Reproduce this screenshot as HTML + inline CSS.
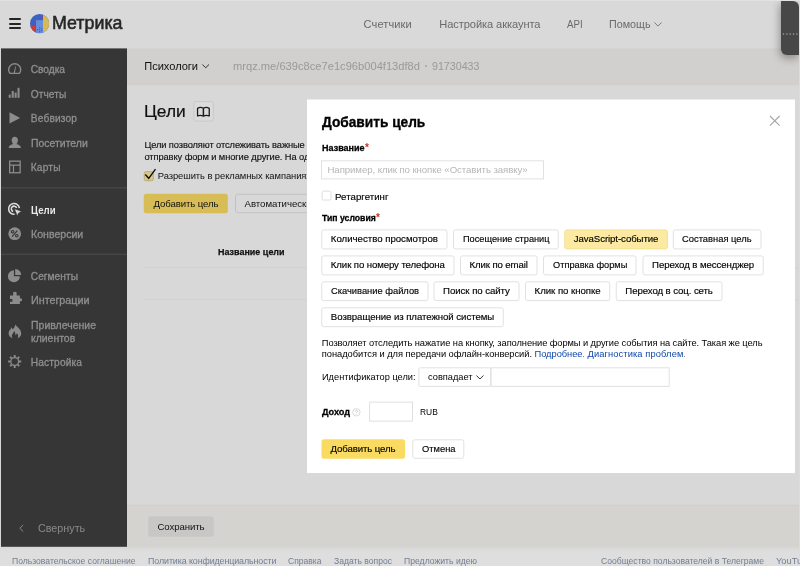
<!DOCTYPE html>
<html lang="ru"><head><meta charset="utf-8"><title>Метрика — Цели</title>
<style>
html,body{margin:0;padding:0;}
body{width:800px;height:566px;overflow:hidden;position:relative;background:#d8d8d8;font-family:"Liberation Sans",sans-serif;}
#page,#modal{position:absolute;left:0;top:0;width:800px;height:566px;overflow:hidden;will-change:transform;}
.t{position:absolute;white-space:nowrap;transform-origin:0 50%;}
.r{position:absolute;box-sizing:border-box;}
.b{position:absolute;box-sizing:border-box;background:#fff;border:1px solid #e1e1e1;border-radius:2.5px;}
.b.ck{background:#ffeba0;border-color:#ffeba0;}
svg{position:absolute;overflow:visible;}

</style></head>
<body>
<div id="page">
<svg style="left:0;top:0" width="800" height="566" viewBox="0 0 800 566">
<rect x="0.00" y="0.00" width="800.00" height="48.40" rx="0.00" fill="#d9d9d9"/>
<rect x="127.00" y="48.40" width="673.00" height="37.10" rx="0.00" fill="#d1d0ce"/>
<rect x="1.00" y="48.40" width="126.00" height="498.40" rx="0.00" fill="#363636"/>
<rect x="1.00" y="187.40" width="126.00" height="1.00" rx="0.00" fill="#4c4c4c"/>
<rect x="1.00" y="253.70" width="126.00" height="1.00" rx="0.00" fill="#4c4c4c"/>
<rect x="127.00" y="505.00" width="673.00" height="41.80" rx="0.00" fill="#d5d3d0"/>
<rect x="127.00" y="504.70" width="673.00" height="0.80" rx="0.00" fill="#cfcecb"/>
<rect x="148.25" y="516.25" width="65.50" height="20.50" rx="2.50" fill="#c8c7c5"/>
<rect x="193.90" y="101.60" width="19.40" height="19.50" rx="2.00" fill="#dbdbdb" stroke="#c9c9c9" stroke-width="1"/>
<rect x="144.25" y="171.75" width="9.00" height="9.00" rx="1.50" fill="#d9c98a" stroke="#b9ab74" stroke-width="1"/>
<rect x="143.75" y="193.75" width="84.05" height="19.55" rx="2.50" fill="#d8bc56"/>
<rect x="235.50" y="194.25" width="94.00" height="18.50" rx="2.00" fill="#d8d8d8" stroke="#c2c2c2" stroke-width="1"/>
<rect x="144.00" y="267.10" width="656.00" height="1.00" rx="0.00" fill="#d2d2d2"/>
<rect x="144.00" y="299.10" width="656.00" height="1.00" rx="0.00" fill="#d2d2d2"/>
</svg>
<!-- footer -->
<div class="r" style="left:0;top:546.8px;width:800px;height:19.2px;background:linear-gradient(#d6d6d6 0,#dcdcdc 3px,#dedede 6px)"></div>
<!-- header -->
<!-- hamburger -->
<div class="r" style="left:9px;top:18.3px;width:11.8px;height:1.8px;border-radius:1px;background:#242424"></div>
<div class="r" style="left:9px;top:22.85px;width:11.8px;height:1.8px;border-radius:1px;background:#242424"></div>
<div class="r" style="left:9px;top:27.4px;width:11.8px;height:1.8px;border-radius:1px;background:#242424"></div>
<!-- logo -->
<svg style="left:29.85px;top:13.75px" width="19.2" height="19.2" viewBox="0 0 19.2 19.2">
  <defs><clipPath id="lc"><circle cx="9.6" cy="9.6" r="9.6"/></clipPath></defs>
  <g clip-path="url(#lc)">
    <rect x="0" y="0" width="19.2" height="19.2" fill="#3f60c0"/>
    <rect x="0" y="11.85" width="5.55" height="8" fill="#cd3d37"/>
    <rect x="6.05" y="6.15" width="6.9" height="14" fill="#668edb"/>
    <rect x="12.55" y="0" width=".5" height="6.2" fill="#6a3a78"/>
    <rect x="12.95" y="0" width="7" height="19.2" fill="#d5ba55"/>
    <g fill="#3758ba"><circle cx="9.65" cy="13.55" r=".6"/><circle cx="11.75" cy="14.65" r=".6"/><circle cx="7.45" cy="15.65" r=".6"/><circle cx="9.65" cy="15.65" r=".6"/><circle cx="11.75" cy="16.65" r=".6"/><circle cx="9.65" cy="17.65" r=".6"/></g>
  </g>
</svg>
<!-- nav chevron -->
<svg style="left:654.4px;top:21.8px" width="9" height="6" viewBox="0 0 9 6"><path d="M0.4 0.5 L4 4.1 L7.6 0.5" fill="none" stroke="#7a7a7a" stroke-width="1"/></svg>
<!-- subheader -->
<svg style="left:202.3px;top:64.2px" width="8" height="5" viewBox="0 0 8 5"><path d="M0.4 0.5 L3.7 3.8 L7 0.5" fill="none" stroke="#333" stroke-width="1"/></svg>
<div class="r" style="left:424.5px;top:65.4px;width:2px;height:2px;border-radius:1px;background:#a3a3a0"></div>
<!-- top-right dark widget -->
<div class="r" style="left:781px;top:1px;width:17.8px;height:53.8px;background:#474747;border-radius:0 6px 0 6px;box-shadow:-1px 3px 9px rgba(0,0,0,.36)"></div>
<svg style="left:0;top:0" width="800" height="60" viewBox="0 0 800 60"><rect x="782.85" y="33.4" width="1.3" height="1.3" fill="#a2a2a2"/><rect x="786.25" y="33.4" width="1.3" height="1.3" fill="#a2a2a2"/><rect x="789.60" y="33.4" width="1.3" height="1.3" fill="#a2a2a2"/><rect x="792.90" y="33.4" width="1.3" height="1.3" fill="#a2a2a2"/><rect x="796.25" y="33.4" width="1.3" height="1.3" fill="#a2a2a2"/></svg>
<!-- sidebar -->
<!-- sidebar icons -->
<svg style="left:0;top:0" width="130" height="566" viewBox="0 0 130 566" fill="#8c8c8c" stroke="none">
  <!-- gauge -->
  <path d="M10.2 73.4 A6.05 5.75 0 1 1 19.2 73.4 Z" fill="none" stroke="#8c8c8c" stroke-width="1.4" stroke-linejoin="round"/>
  <path d="M13.6 72.9 L14.9 72.9 L16 66.4 L15.4 66.2 Z" fill="#8c8c8c"/>
  <!-- bars -->
  <rect x="8.7" y="94.6" width="2.05" height="3.2"/><rect x="11.7" y="91" width="2.05" height="6.8"/><rect x="14.6" y="92.6" width="2.05" height="5.2"/><rect x="17.5" y="87.8" width="2.05" height="10"/>
  <!-- play -->
  <path d="M9.5 112.2 L20.1 117.9 L9.5 123.6 Z"/>
  <!-- person -->
  <ellipse cx="14.8" cy="140.3" rx="3.1" ry="3.6"/>
  <path d="M8.7 147.9 C8.7 145.6 10.5 145.1 12.6 144.3 L13 142.5 L16.6 142.5 L17 144.3 C19.1 145.1 20.9 145.6 20.9 147.9 Z"/>
  <!-- maps -->
  <rect x="9.65" y="161.15" width="10.5" height="11.6" fill="none" stroke="#8c8c8c" stroke-width="1.3"/>
  <path d="M9.6 165.1 H20.2 M13.5 165.1 V172.8" fill="none" stroke="#8c8c8c" stroke-width="1.2"/>
  <!-- goals (active) -->
  <g fill="none" stroke="#dcdcdc" stroke-width="1.55">
    <path d="M14.6 214.3 A5.4 5.4 0 1 1 19.4 208.2"/>
    <path d="M13.2 211.4 A2.7 2.7 0 1 1 16.6 208"/>
  </g>
  <path d="M14.4 208.7 L21.5 211.5 L18.6 213 L17.3 215.8 Z" fill="#dcdcdc" stroke="#363636" stroke-width=".5"/>
  <!-- conversions -->
  <circle cx="14.7" cy="233.7" r="6.4"/>
  <g fill="none" stroke="#363636" stroke-width="1.15">
    <circle cx="12.6" cy="231.7" r="1.25"/><circle cx="16.8" cy="235.7" r="1.25"/><path d="M17.3 230.7 L12.1 236.7"/>
  </g>
  <!-- segments (pie) -->
  <path d="M13.9 270.2 A6 6 0 1 0 19.9 276.2 L13.9 276.2 Z"/>
  <path d="M15.2 268.9 A6 6 0 0 1 21.2 274.9 L15.2 274.9 Z"/>
  <!-- puzzle -->
  <path d="M10 295.5 H13.2 V294 A1.75 1.75 0 1 1 16.6 294 V295.5 H19.9 V298.3 H20.6 A1.5 1.5 0 1 1 20.6 301.3 H19.9 V304 H10 V301.8 H12.4 V298.9 H10 Z"/>
  <!-- flame -->
  <path d="M15.2 324.6 C17.2 327.2 21.2 329.4 21.2 333.4 C21.2 335.8 19.8 337.5 17.6 338.2 C18.6 336.6 18.2 334.6 16.9 333.3 C16.4 334.5 15.9 334.9 15.4 335.2 C15.6 333.5 15 332.2 13.9 331.1 C13.9 333.2 11.8 334.1 11.8 336 C11.8 336.9 12.1 337.6 12.6 338.2 C10.3 337.6 8.6 335.8 8.6 333.3 C8.6 330.4 10.8 329.2 11.7 327.2 C12.2 328 12.4 328.7 12.4 329.6 C13.9 328.4 15.1 326.8 15.2 324.6 Z"/>
  <!-- gear -->
  <circle cx="14.7" cy="361.5" r="3.9" fill="none" stroke="#8c8c8c" stroke-width="1.3"/>
  <g stroke="#8c8c8c" stroke-width="1.9" fill="none">
    <path d="M14.7 355 V357.2 M14.7 365.8 V368 M8.2 361.5 H10.4 M19 361.5 H21.2 M10.1 356.9 L11.65 358.45 M17.75 364.55 L19.3 366.1 M10.1 366.1 L11.65 364.55 M17.75 358.45 L19.3 356.9"/>
  </g>
  <!-- collapse chevron -->
  <path d="M23.2 525 L19.8 528.3 L23.2 531.6" fill="none" stroke="#8a8a8a" stroke-width="1"/>
</svg>
<!-- bottom bar -->
<!-- footer -->
<!-- title book icon -->
<svg style="left:190px;top:100px" width="30" height="24" viewBox="190 100 30 24"><path d="M197.55 108.4 Q200.5 106.5 203.4 108.3 Q206.3 106.5 209.25 108.4 V115.9 Q206.3 114.7 203.4 116.1 Q200.5 114.7 197.55 115.9 Z" fill="none" stroke="#1c1c1c" stroke-width="1.3" stroke-linejoin="round"/><path d="M203.4 108.3 V116.1" stroke="#1c1c1c" stroke-width="1.5"/></svg>
<!-- checkbox -->
<svg style="left:140px;top:160px" width="24" height="24" viewBox="140 160 24 24"><path d="M145.3 174.5 L148.7 178.3 L155.5 169.1" fill="none" stroke="#111" stroke-width="1.4"/></svg>
<!-- main buttons -->
<!-- table lines -->

<!-- window edge strips -->
<div class="r" style="left:798.8px;top:0;width:1.2px;height:566px;background:#dcdcdc"></div>
<div class="r" style="left:0;top:0;width:800px;height:.7px;background:#e2e2e2"></div>

<span class="t" style="left:52.20px;top:12px;line-height:21px;height:21px;font-size:18.4px;color:#262626;transform:scaleX(0.9691);-webkit-text-stroke:0.55px #262626;">Метрика</span>
<span class="t" style="left:363.60px;top:18px;line-height:12px;height:12px;font-size:11.1px;color:#6a6a6a;letter-spacing:0.060px;">Счетчики</span>
<span class="t" style="left:439.30px;top:18px;line-height:12px;height:12px;font-size:11.1px;color:#6a6a6a;letter-spacing:-0.087px;">Настройка аккаунта</span>
<span class="t" style="left:567.30px;top:18px;line-height:12px;height:12px;font-size:11.1px;color:#6a6a6a;transform:scaleX(0.8776);">API</span>
<span class="t" style="left:609.00px;top:18px;line-height:12px;height:12px;font-size:11.1px;color:#6a6a6a;transform:scaleX(0.9683);">Помощь</span>
<span class="t" style="left:144.30px;top:60px;line-height:12px;height:12px;font-size:11.1px;color:#111;letter-spacing:-0.047px;">Психологи</span>
<span class="t" style="left:233.00px;top:61px;line-height:11px;height:11px;font-size:10.4px;color:#9a9996;transform:scaleX(1.0718);">mrqz.me/639c8ce7e1c96b004f13df8d</span>
<span class="t" style="left:432.00px;top:61px;line-height:11px;height:11px;font-size:10.4px;color:#9a9996;transform:scaleX(1.0274);">91730433</span>
<span class="t" style="left:30.75px;top:64px;line-height:11px;height:11px;font-size:10.2px;color:#8f8f8f;letter-spacing:-0.028px;-webkit-text-stroke:0.3px #8f8f8f;">Сводка</span>
<span class="t" style="left:30.75px;top:89px;line-height:11px;height:11px;font-size:10.2px;color:#8f8f8f;letter-spacing:0.056px;-webkit-text-stroke:0.3px #8f8f8f;">Отчеты</span>
<span class="t" style="left:30.75px;top:113px;line-height:11px;height:11px;font-size:10.2px;color:#8f8f8f;letter-spacing:0.152px;-webkit-text-stroke:0.3px #8f8f8f;">Вебвизор</span>
<span class="t" style="left:30.75px;top:138px;line-height:11px;height:11px;font-size:10.2px;color:#8f8f8f;transform:scaleX(1.0266);-webkit-text-stroke:0.3px #8f8f8f;">Посетители</span>
<span class="t" style="left:30.75px;top:162px;line-height:11px;height:11px;font-size:10.2px;color:#8f8f8f;letter-spacing:0.180px;-webkit-text-stroke:0.3px #8f8f8f;">Карты</span>
<span class="t" style="left:30.75px;top:229px;line-height:11px;height:11px;font-size:10.2px;color:#8f8f8f;transform:scaleX(1.0379);-webkit-text-stroke:0.3px #8f8f8f;">Конверсии</span>
<span class="t" style="left:30.75px;top:271px;line-height:11px;height:11px;font-size:10.2px;color:#8f8f8f;letter-spacing:0.031px;-webkit-text-stroke:0.3px #8f8f8f;">Сегменты</span>
<span class="t" style="left:30.75px;top:295px;line-height:11px;height:11px;font-size:10.2px;color:#8f8f8f;transform:scaleX(1.0552);-webkit-text-stroke:0.3px #8f8f8f;">Интеграции</span>
<span class="t" style="left:30.75px;top:320px;line-height:11px;height:11px;font-size:10.2px;color:#8f8f8f;transform:scaleX(1.0302);-webkit-text-stroke:0.3px #8f8f8f;">Привлечение</span>
<span class="t" style="left:30.75px;top:333px;line-height:11px;height:11px;font-size:10.2px;color:#8f8f8f;transform:scaleX(1.0257);-webkit-text-stroke:0.3px #8f8f8f;">клиентов</span>
<span class="t" style="left:30.75px;top:357px;line-height:11px;height:11px;font-size:10.2px;color:#8f8f8f;letter-spacing:0.137px;-webkit-text-stroke:0.3px #8f8f8f;">Настройка</span>
<span class="t" style="left:30.75px;top:205px;line-height:11px;height:11px;font-size:10.2px;color:#e8e8e8;font-weight:bold;transform:scaleX(0.9454);">Цели</span>
<span class="t" style="left:37.50px;top:522px;line-height:12px;height:12px;font-size:11.1px;color:#8a8a8a;transform:scaleX(0.9701);">Свернуть</span>
<span class="t" style="left:144.30px;top:102px;line-height:19px;height:19px;font-size:16.8px;color:#111;transform:scaleX(1.0332);-webkit-text-stroke:0.2px #111;">Цели</span>
<span class="t" style="left:144.40px;top:140px;line-height:10px;height:10px;font-size:9.3px;color:#111;letter-spacing:-0.098px;-webkit-text-stroke:0.15px #111;">Цели позволяют отслеживать важные действия посетителей на сайте</span>
<span class="t" style="left:144.40px;top:152px;line-height:10px;height:10px;font-size:9.3px;color:#111;letter-spacing:-0.077px;-webkit-text-stroke:0.15px #111;">отправку форм и многие другие. На одном счетчике можно задать</span>
<span class="t" style="left:157.80px;top:170px;line-height:11px;height:11px;font-size:9.4px;color:#111;letter-spacing:-0.070px;">Разрешить в рекламных кампаниях использовать</span>
<span class="t" style="left:153.50px;top:198px;line-height:11px;height:11px;font-size:9.63px;color:#111;letter-spacing:-0.107px;">Добавить цель</span>
<span class="t" style="left:244.50px;top:198px;line-height:11px;height:11px;font-size:9.63px;color:#111;letter-spacing:-0.011px;">Автоматические цели</span>
<span class="t" style="left:218.00px;top:246px;line-height:11px;height:11px;font-size:9.63px;color:#111;font-weight:bold;transform:scaleX(0.9325);-webkit-text-stroke:0.25px #111;">Название цели</span>
<span class="t" style="left:157.50px;top:521px;line-height:11px;height:11px;font-size:9.63px;color:#111;letter-spacing:-0.093px;">Сохранить</span>
<span class="t" style="left:12.40px;top:556px;line-height:10px;height:10px;font-size:8.9px;color:#737e92;transform:scaleX(0.9669);">Пользовательское соглашение</span>
<span class="t" style="left:148.00px;top:556px;line-height:10px;height:10px;font-size:8.9px;color:#737e92;letter-spacing:-0.094px;">Политика конфиденциальности</span>
<span class="t" style="left:288.00px;top:556px;line-height:10px;height:10px;font-size:8.9px;color:#737e92;transform:scaleX(0.9619);">Справка</span>
<span class="t" style="left:333.50px;top:556px;line-height:10px;height:10px;font-size:8.9px;color:#737e92;transform:scaleX(0.9659);">Задать вопрос</span>
<span class="t" style="left:404.00px;top:556px;line-height:10px;height:10px;font-size:8.9px;color:#737e92;transform:scaleX(0.9715);">Предложить идею</span>
<span class="t" style="left:601.00px;top:556px;line-height:10px;height:10px;font-size:8.9px;color:#737e92;transform:scaleX(0.9657);">Сообщество пользователей в Телеграме</span>
<span class="t" style="left:775.50px;top:556px;line-height:10px;height:10px;font-size:8.9px;color:#737e92;transform:scaleX(1.0466);">YouTube</span>
</div>
<div id="modal">
<svg style="left:0;top:0" width="800" height="566" viewBox="0 0 800 566">
<rect x="307.00" y="99.50" width="488.00" height="373.50" rx="0.00" fill="#fff"/>
<rect x="321.50" y="160.80" width="222.00" height="18.10" rx="0.00" fill="#fff" stroke="#e1e1e1" stroke-width="1"/>
<rect x="322.10" y="191.10" width="8.90" height="8.90" rx="1.50" fill="#fff" stroke="#dedede" stroke-width="1"/>
<rect x="418.90" y="367.80" width="71.70" height="18.60" rx="1.30" fill="#fff" stroke="#e1e1e1" stroke-width="1"/>
<rect x="491.10" y="367.80" width="178.10" height="18.60" rx="0.00" fill="#fff" stroke="#e1e1e1" stroke-width="1"/>
<rect x="369.60" y="402.10" width="42.90" height="19.00" rx="0.00" fill="#fff" stroke="#e0e0e0" stroke-width="1"/>
<rect x="321.50" y="439.30" width="83.50" height="19.50" rx="2.50" fill="#fadb62"/>
<rect x="412.80" y="439.80" width="51.00" height="18.50" rx="2.00" fill="#fff" stroke="#e1e1e1" stroke-width="1"/>
<rect x="321.75" y="229.90" width="125.25" height="19.00" rx="2.00" fill="#fff" stroke="#e1e1e1" stroke-width="1"/>
<rect x="453.50" y="229.90" width="104.75" height="19.00" rx="2.00" fill="#fff" stroke="#e1e1e1" stroke-width="1"/>
<rect x="564.75" y="229.90" width="102.75" height="19.00" rx="2.00" fill="#fdeaa2" stroke="#f5e093" stroke-width="1"/>
<rect x="673.25" y="229.90" width="87.75" height="19.00" rx="2.00" fill="#fff" stroke="#e1e1e1" stroke-width="1"/>
<rect x="321.75" y="255.90" width="132.25" height="19.00" rx="2.00" fill="#fff" stroke="#e1e1e1" stroke-width="1"/>
<rect x="460.50" y="255.90" width="76.50" height="19.00" rx="2.00" fill="#fff" stroke="#e1e1e1" stroke-width="1"/>
<rect x="543.50" y="255.90" width="92.50" height="19.00" rx="2.00" fill="#fff" stroke="#e1e1e1" stroke-width="1"/>
<rect x="643.00" y="255.90" width="120.25" height="19.00" rx="2.00" fill="#fff" stroke="#e1e1e1" stroke-width="1"/>
<rect x="321.75" y="281.80" width="106.25" height="18.80" rx="2.00" fill="#fff" stroke="#e1e1e1" stroke-width="1"/>
<rect x="434.00" y="281.80" width="85.00" height="18.80" rx="2.00" fill="#fff" stroke="#e1e1e1" stroke-width="1"/>
<rect x="525.50" y="281.80" width="84.25" height="18.80" rx="2.00" fill="#fff" stroke="#e1e1e1" stroke-width="1"/>
<rect x="616.25" y="281.80" width="105.75" height="18.80" rx="2.00" fill="#fff" stroke="#e1e1e1" stroke-width="1"/>
<rect x="321.75" y="307.80" width="181.50" height="18.90" rx="2.00" fill="#fff" stroke="#e1e1e1" stroke-width="1"/>
</svg>
<!-- close -->
<svg style="left:769px;top:115px" width="12" height="12" viewBox="0 0 12 12"><path d="M1 1 L10.6 10.6 M10.6 1 L1 10.6" fill="none" stroke="#a6a6a6" stroke-width="1.15"/></svg>
<!-- name input -->
<!-- checkbox -->
<!-- select + input -->
<svg style="left:475.6px;top:375.4px" width="9" height="6" viewBox="0 0 9 6"><path d="M0.4 0.5 L3.9 4 L7.4 0.5" fill="none" stroke="#333" stroke-width="1"/></svg>
<!-- income help + input -->
<svg style="left:351.6px;top:408.2px" width="9" height="9" viewBox="0 0 9 9"><circle cx="4.4" cy="4.3" r="3.7" fill="none" stroke="#cfcfcf" stroke-width=".8"/><path d="M3.3 3.4 Q3.3 2.4 4.4 2.4 Q5.5 2.4 5.5 3.3 Q5.5 4 4.4 4.5 V5.2 M4.4 6 V6.6" fill="none" stroke="#bdbdbd" stroke-width=".7"/></svg>
<!-- action buttons -->

<span class="t" style="left:321.70px;top:114px;line-height:16px;height:16px;font-size:14.8px;color:#000;font-weight:bold;transform:scaleX(0.9255);-webkit-text-stroke:0.35px #000;">Добавить цель</span>
<span class="t" style="left:321.80px;top:142px;line-height:11px;height:11px;font-size:9.63px;color:#000;font-weight:bold;transform:scaleX(0.9376);-webkit-text-stroke:0.3px #000;">Название</span>
<span class="t" style="left:364.90px;top:142px;line-height:11px;height:11px;font-size:10px;color:#c9302a;font-weight:bold;transform:scaleX(0.9984);">*</span>
<span class="t" style="left:327.50px;top:164px;line-height:11px;height:11px;font-size:9.63px;color:#b6b6b6;letter-spacing:-0.077px;">Например, клик по кнопке «Оставить заявку»</span>
<span class="t" style="left:335.00px;top:191px;line-height:11px;height:11px;font-size:9.63px;color:#000;letter-spacing:0.052px;-webkit-text-stroke:0.15px #000;">Ретаргетинг</span>
<span class="t" style="left:321.80px;top:212px;line-height:11px;height:11px;font-size:9.63px;color:#000;font-weight:bold;transform:scaleX(0.9011);-webkit-text-stroke:0.3px #000;">Тип условия</span>
<span class="t" style="left:376.10px;top:212px;line-height:11px;height:11px;font-size:10px;color:#c9302a;font-weight:bold;transform:scaleX(0.9984);">*</span>
<span class="t" style="left:321.80px;top:338px;line-height:10px;height:10px;font-size:9.3px;color:#000;letter-spacing:-0.075px;">Позволяет отследить нажатие на кнопку, заполнение формы и другие события на сайте. Такая же цель</span>
<span class="t" style="left:321.80px;top:349px;line-height:10px;height:10px;font-size:9.3px;color:#000;letter-spacing:-0.031px;">понадобится и для передачи офлайн-конверсий.</span>
<span class="t" style="left:534.50px;top:349px;line-height:10px;height:10px;font-size:9.3px;color:#0f47a8;letter-spacing:-0.027px;">Подробнее</span>
<span class="t" style="left:582.90px;top:349px;line-height:10px;height:10px;font-size:9.3px;color:#000;transform:scaleX(0.5398);">.</span>
<span class="t" style="left:587.50px;top:349px;line-height:10px;height:10px;font-size:9.3px;color:#0f47a8;letter-spacing:0.114px;">Диагностика проблем</span>
<span class="t" style="left:683.70px;top:349px;line-height:10px;height:10px;font-size:9.3px;color:#000;transform:scaleX(0.5398);">.</span>
<span class="t" style="left:321.50px;top:371px;line-height:11px;height:11px;font-size:9.63px;color:#000;transform:scaleX(0.9576);">Идентификатор цели:</span>
<span class="t" style="left:427.80px;top:371px;line-height:11px;height:11px;font-size:9.63px;color:#000;transform:scaleX(0.9617);">совпадает</span>
<span class="t" style="left:321.70px;top:406px;line-height:11px;height:11px;font-size:9.63px;color:#000;font-weight:bold;transform:scaleX(0.9495);-webkit-text-stroke:0.3px #000;">Доход</span>
<span class="t" style="left:419.60px;top:406px;line-height:11px;height:11px;font-size:9.5px;color:#000;transform:scaleX(0.8872);">RUB</span>
<span class="t" style="left:330.50px;top:443px;line-height:11px;height:11px;font-size:9.63px;color:#000;letter-spacing:-0.107px;-webkit-text-stroke:0.15px #000;">Добавить цель</span>
<span class="t" style="left:421.50px;top:443px;line-height:11px;height:11px;font-size:9.63px;color:#000;transform:scaleX(0.9697);-webkit-text-stroke:0.15px #000;">Отмена</span>
<span class="t" style="left:330.85px;top:233px;line-height:11px;height:11px;font-size:9.63px;color:#000;-webkit-text-stroke:0.15px #000;">Количество просмотров</span>
<span class="t" style="left:462.60px;top:233px;line-height:11px;height:11px;font-size:9.63px;color:#000;transform:scaleX(0.9568);-webkit-text-stroke:0.15px #000;">Посещение страниц</span>
<span class="t" style="left:573.85px;top:233px;line-height:11px;height:11px;font-size:9.63px;color:#000;letter-spacing:-0.084px;-webkit-text-stroke:0.15px #000;">JavaScript-событие</span>
<span class="t" style="left:682.35px;top:233px;line-height:11px;height:11px;font-size:9.63px;color:#000;transform:scaleX(0.9725);-webkit-text-stroke:0.15px #000;">Составная цель</span>
<span class="t" style="left:330.85px;top:259px;line-height:11px;height:11px;font-size:9.63px;color:#000;letter-spacing:-0.104px;-webkit-text-stroke:0.15px #000;">Клик по номеру телефона</span>
<span class="t" style="left:469.60px;top:259px;line-height:11px;height:11px;font-size:9.63px;color:#000;letter-spacing:-0.120px;-webkit-text-stroke:0.15px #000;">Клик по email</span>
<span class="t" style="left:552.60px;top:259px;line-height:11px;height:11px;font-size:9.63px;color:#000;transform:scaleX(0.9581);-webkit-text-stroke:0.15px #000;">Отправка формы</span>
<span class="t" style="left:652.10px;top:259px;line-height:11px;height:11px;font-size:9.63px;color:#000;letter-spacing:-0.088px;-webkit-text-stroke:0.15px #000;">Переход в мессенджер</span>
<span class="t" style="left:330.85px;top:285px;line-height:11px;height:11px;font-size:9.63px;color:#000;transform:scaleX(0.9694);-webkit-text-stroke:0.15px #000;">Скачивание файлов</span>
<span class="t" style="left:443.10px;top:285px;line-height:11px;height:11px;font-size:9.63px;color:#000;letter-spacing:-0.051px;-webkit-text-stroke:0.15px #000;">Поиск по сайту</span>
<span class="t" style="left:534.60px;top:285px;line-height:11px;height:11px;font-size:9.63px;color:#000;letter-spacing:-0.035px;-webkit-text-stroke:0.15px #000;">Клик по кнопке</span>
<span class="t" style="left:625.35px;top:285px;line-height:11px;height:11px;font-size:9.63px;color:#000;letter-spacing:-0.086px;-webkit-text-stroke:0.15px #000;">Переход в соц. сеть</span>
<span class="t" style="left:330.85px;top:311px;line-height:11px;height:11px;font-size:9.63px;color:#000;letter-spacing:-0.058px;-webkit-text-stroke:0.15px #000;">Возвращение из платежной системы</span>
</div>
</body></html>
